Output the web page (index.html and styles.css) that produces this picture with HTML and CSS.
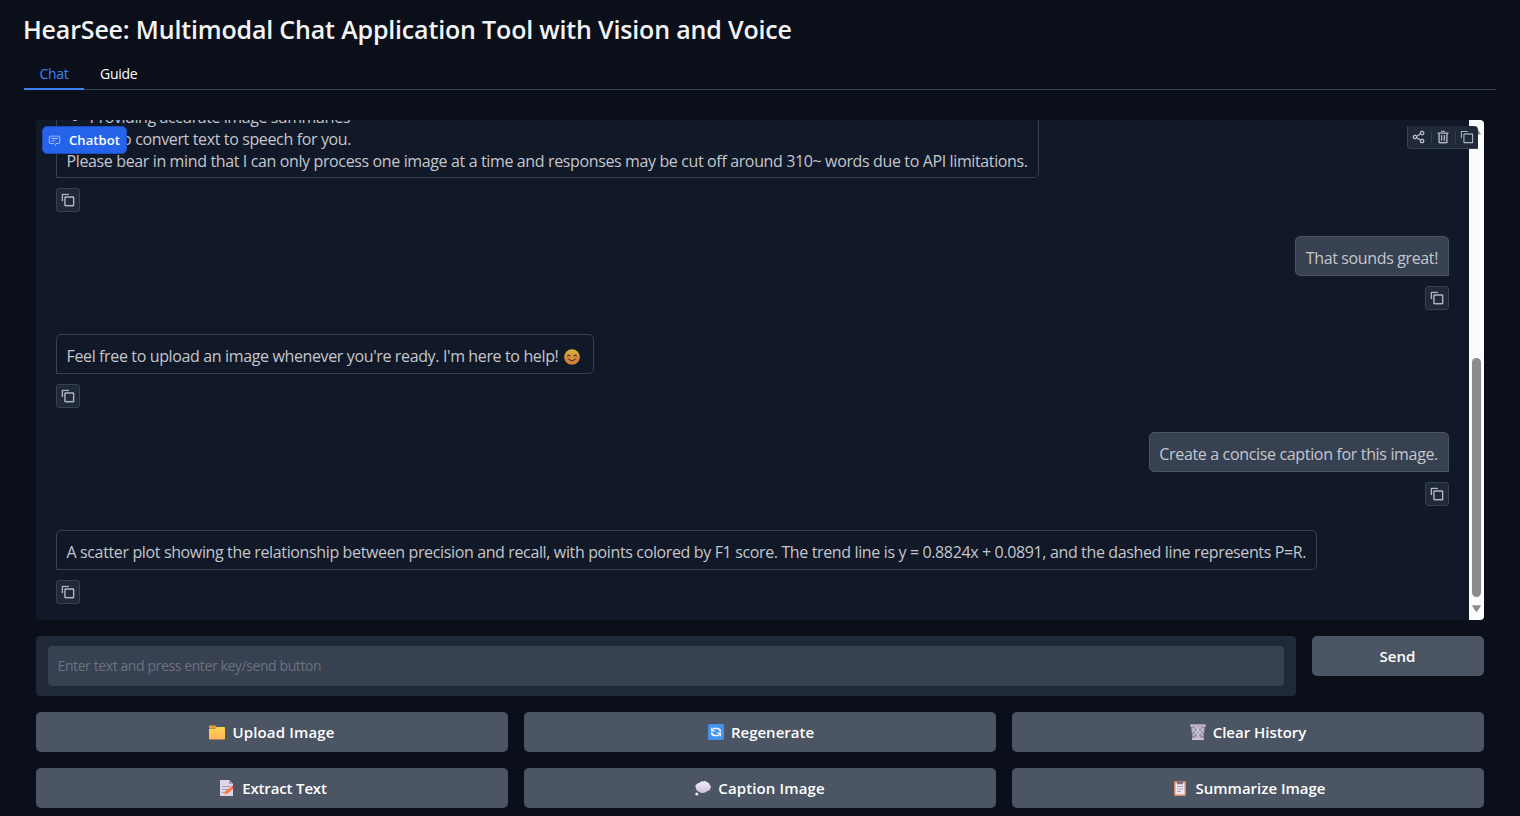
FILE: index.html
```html
<!DOCTYPE html>
<html lang="en">
<head>
<meta charset="utf-8">
<title>HearSee</title>
<link rel="stylesheet" href="styles.css">
</head>
<body>
<svg class="defs" width="0" height="0" aria-hidden="true">
  <symbol id="copy" viewBox="0 0 32 32"><path fill="currentColor" d="M28 10v18H10V10h18m0-2H10a2 2 0 0 0-2 2v18a2 2 0 0 0 2 2h18a2 2 0 0 0 2-2V10a2 2 0 0 0-2-2Z"/><path fill="currentColor" d="M4 18H2V4a2 2 0 0 1 2-2h14v2H4Z"/></symbol>
</svg>
<main class="app">
  <h1 class="title">HearSee: Multimodal Chat Application Tool with Vision and Voice</h1>
  <nav class="tabs"><button class="tab active">Chat</button><button class="tab">Guide</button></nav>
  <section class="panel">
    <div class="chatbot">
      <div class="log">
        <div class="bubble bot">
          <ul class="list"><li>Providing accurate image summaries</li></ul>
          <p class="line l-able">Happy to convert text to speech for you.</p>
          <p class="line l-bear">Please bear in mind that I can only process one image at a time and responses may be cut off around 310~ words due to API limitations.</p>
        </div>
        <button class="copy"><svg><use href="#copy"/></svg></button>
        <div class="bubble user"><p class="line l-great">That sounds great!</p></div>
        <button class="copy right"><svg><use href="#copy"/></svg></button>
        <div class="bubble bot"><p class="line l-free">Feel free to upload an image whenever you're ready. I'm here to help!
          <svg class="smile" viewBox="0 0 16 16"><defs><linearGradient id="face" x1="0" y1="0" x2="0" y2="1"><stop offset="0" stop-color="#d8b13c"/><stop offset="1" stop-color="#d57b38"/></linearGradient></defs><circle cx="8" cy="8" r="7.8" fill="url(#face)"/><ellipse cx="3.5" cy="9.4" rx="2" ry="1.6" fill="#d9653c" opacity=".55"/><ellipse cx="12.5" cy="9.4" rx="2" ry="1.6" fill="#d9653c" opacity=".55"/><path d="M3.5 7q1.3-1.7 2.6 0M9.9 7q1.3-1.7 2.6 0M4.8 10.2q3.2 3.2 6.4 0" fill="none" stroke="#50343b" stroke-width="1.1" stroke-linecap="round"/></svg></p></div>
        <button class="copy"><svg><use href="#copy"/></svg></button>
        <div class="bubble user"><p class="line l-create">Create a concise caption for this image.</p></div>
        <button class="copy right"><svg><use href="#copy"/></svg></button>
        <div class="bubble bot"><p class="line l-plot">A scatter plot showing the relationship between precision and recall, with points colored by F1 score. The trend line is y = 0.8824x + 0.0891, and the dashed line represents P=R.</p></div>
        <button class="copy"><svg><use href="#copy"/></svg></button>
      </div>
      <div class="scrollbar">
        <svg class="arrow" viewBox="0 0 9 7"><path d="M1 6.5h7q1 0 .5-1L5.3.8q-.8-1-1.6 0L.5 5.500q-.5 1 .5 1Z" fill="#8b8b8b"/></svg>
        <div class="thumb"></div>
        <svg class="arrow" viewBox="0 0 9 7"><path d="M1 .3h7q1 0 .7 1L5.3 6.300q-.8 1-1.600 0L.3 1.300Q0 .3 1 .3Z" fill="#8b8b8b"/></svg>
      </div>
      <div class="label">
        <svg viewBox="0 0 32 32"><path fill="currentColor" d="M17.740 30 16 29l4-7h6a2 2 0 0 0 2-2V8a2 2 0 0 0-2-2H6a2 2 0 0 0-2 2v12a2 2 0 0 0 2 2h9v2H6a4 4 0 0 1-4-4V8a4 4 0 0 1 4-4h20a4 4 0 0 1 4 4v12a4 4 0 0 1-4 4h-4.840Z"/><path fill="currentColor" d="M8 10h16v2H8zm0 6h10v2H8z"/></svg>
        <span>Chatbot</span>
      </div>
      <div class="tools">
        <svg viewBox="0 0 32 32"><path fill="currentColor" stroke="currentColor" stroke-width=".6" d="M23 20a5 5 0 0 0-3.890 1.890l-7.310-4.570a4.460 4.460 0 0 0 0-2.640l7.310-4.570A5 5 0 1 0 18 7a4.790 4.790 0 0 0 .2 1.320l-7.310 4.570a5 5 0 1 0 0 6.220l7.310 4.570A4.790 4.790 0 0 0 18 25a5 5 0 1 0 5-5ZM23 4a3 3 0 1 1-3 3 3 3 0 0 1 3-3ZM7 19a3 3 0 1 1 3-3 3 3 0 0 1-3 3Zm16 9a3 3 0 1 1 3-3 3 3 0 0 1-3 3Z"/></svg>
        <i></i>
        <svg viewBox="0 0 32 32"><path fill="currentColor" stroke="currentColor" stroke-width=".6" d="M12 12h2v12h-2zM18 12h2v12h-2zM4 6v2h2v20a2 2 0 0 0 2 2h16a2 2 0 0 0 2-2V8h2V6ZM8 28V8h16v20ZM12 2h8v2h-8z"/></svg>
        <i></i>
        <svg><use href="#copy"/></svg>
      </div>
    </div>
    <div class="entry">
      <div class="field"><input type="text" placeholder="Enter text and press enter key/send button"></div>
      <button class="btn b-send">Send</button>
    </div>
    <div class="actions">
      <button class="btn b-upload"><svg class="emoji" viewBox="0 0 16 16"><defs><linearGradient id="fold" x1="0" y1="0" x2="0" y2="1"><stop offset="0" stop-color="#ffd84d"/><stop offset="1" stop-color="#ffb15c"/></linearGradient></defs><path d="M0 2.500q0-1 1-1h5.500l2 2.500H0Z" fill="#e3a33a"/><path d="M0 5.500q0-1 1-1h5.500l2-1.500H15q1 0 1 1v10.500q0 1-1 1H1q-1 0-1-1Z" fill="url(#fold)"/></svg>Upload Image</button>
      <button class="btn b-regen"><svg class="emoji" viewBox="0 0 16 16"><rect width="16" height="16" rx="1.500" fill="#4394ef"/><g fill="none" stroke="#f4f1ff" stroke-width="1.700"><path d="M3.500 8.300q.3 3.200 3.700 3.200h4M12.500 7.700q-.3-3.200-3.700-3.200h-4"/></g><path d="M3 3.200v4.400h4.400ZM13 12.800V8.400H8.600Z" fill="#f4f1ff"/></svg>Regenerate</button>
      <button class="btn b-clear"><svg class="emoji" viewBox="0 0 16 16"><path d="M1 2h14l-1.500 14h-11Z" fill="#9992a5"/><path d="m2 4 9 11M6 3l7 9M10 3l4 5M14 4 5 15M10 3l-7 9M6 3 2 8M8 3v12" stroke="#e0dbe7" stroke-width=".8"/><path d="M2 15h12" stroke="#d8d1df" stroke-width="1.500"/><rect width="16" height="2.500" y=".3" rx="1" fill="#bcb3c6"/></svg>Clear History</button>
      <button class="btn b-extract"><svg class="emoji" viewBox="0 0 16 16"><path d="M1 0h9l4 4v12H1Z" fill="#ddd6e6"/><path d="M10 0v4h4Z" fill="#aaa1b8"/><path d="M3 6.500h8M3 9.500h6M3 12.500h3" stroke="#a79fb2"/><path d="m5 15 1-3.500 6-4.500 2 2-6 5Z" fill="#ff7846"/><path d="m12 7 1.500-1.300 2 2L14 9Z" fill="#e8443f"/><path d="m5 15 .8-2.500 1.700 1.800Z" fill="#f5c796"/></svg>Extract Text</button>
      <button class="btn b-caption"><svg class="emoji" viewBox="0 0 16 16"><defs><linearGradient id="cloud" x1="0" y1="0" x2="0" y2="1"><stop offset="0" stop-color="#f5f2fa"/><stop offset="1" stop-color="#cbbfe0"/></linearGradient></defs><path d="M4.500 3Q5.500.8 8 1.500q2.500-1.300 4 .7 2.500.2 2.600 2.500 2.200 1.800.6 4-.4 2.200-2.900 2.300-1.400 2-3.800 1.700-2.600 1-4-.8Q1 11.200 1.200 8.500-.5 6 1.400 4.500 2 2.800 4.500 3Z" fill="url(#cloud)"/><circle cx="1.800" cy="14" r="1.600" fill="#eee8f4"/></svg>Caption Image</button>
      <button class="btn b-summary"><svg class="emoji" viewBox="0 0 16 16"><rect x="2" y="1" width="12" height="15" rx="1" fill="#d98c65"/><path d="M3.500 3h9v11.500h-9Z" fill="#eee8f5"/><path d="M5 6.500h6M5 9h6M5 11.500h4" stroke="#aaa0b5"/><path d="M5 1.500h1.700q.2-1.500 1.300-1.500t1.300 1.500H11v2.700H5Z" fill="#796e80"/></svg>Summarize Image</button>
    </div>
  </section>
</main>
</body>
</html>
```
FILE: styles.css
```css
* { box-sizing: border-box; }
body { margin: 0; height: 816px; overflow: hidden; background: #0b0f19; color: #fff; font-family: "Open Sans", "Noto Sans", sans-serif; }
.defs { position: absolute; }
button { font: inherit; color: inherit; border: 0; background: none; padding: 0; white-space: nowrap; }
.app { padding: 0 24px; }
.title { margin: 0 0 0 -1px; padding-top: 11px; height: 60px; font-size: 25px; line-height: 36px; font-weight: 600; color: #f3f4f6; white-space: nowrap; letter-spacing: -.17px; }
.tabs { display: flex; height: 30px; border-bottom: 1px solid #374151; }
.tab { height: 30px; padding: 0 16px 2px; font-size: 14px; line-height: 28px; letter-spacing: -.3px; }
.tab.active { width: 60px; padding: 0; border-bottom: 2px solid #3b82f6; color: #3b82f6; }
.panel { display: flex; flex-direction: column; gap: 16px; padding: 30px 12px 0; }
.chatbot { position: relative; display: flex; height: 500px; border-radius: 4px; overflow: hidden; background: #111827; }
.log { flex: 1; min-width: 0; display: flex; flex-direction: column; justify-content: flex-end; align-items: flex-start; padding: 0 20px 16px; }
.bubble { flex: none; padding: 10px 10px 5px 9.5px; border: 1px solid #374151; border-radius: 5px; font-size: 16px; line-height: 22px; color: #c4c7cd; white-space: nowrap; }
.bot { border-bottom-left-radius: 0; }
.user { align-self: flex-end; background: #374151; border-color: #4b5563; border-bottom-right-radius: 0; }
.line { margin: 0; height: 23px; letter-spacing: -.365px; }
.list { margin: 0; padding-left: 23px; letter-spacing: -.44px; }
.l-able { height: 22px; }
.l-bear { height: 22px; letter-spacing: -.37px; }
.l-great { letter-spacing: -.37px; }
.l-free { padding-right: 3px; }
.l-create { letter-spacing: -.34px; }
.copy { flex: none; display: flex; align-items: center; justify-content: center; width: 24px; height: 24px; margin: 10px 0 24px; border: 1px solid #374151; border-radius: 3px; background: #1f2937; color: #d1d5db; }
.copy:last-child { margin-bottom: 0; }
.copy.right { align-self: flex-end; }
.copy svg { width: 14px; height: 14px; stroke: currentColor; stroke-width: .6; }
.smile { width: 16px; height: 16px; margin-left: 2px; vertical-align: -3px; }
.scrollbar { width: 15px; display: flex; flex-direction: column; align-items: center; padding: 8px 0; background: #fcfcfc; }
.arrow { width: 9px; height: 7px; flex: none; }
.thumb { width: 9px; height: 239px; margin-top: auto; margin-bottom: 8px; border-radius: 5px; background: #8b8b8b; }
.label { position: absolute; left: 6px; top: 6px; display: flex; align-items: center; gap: 8px; width: 85px; height: 28px; padding-left: 5px; border: 1px solid #1d4fbb; border-radius: 5px; background: #2563eb; font-size: 13px; font-weight: 600; letter-spacing: .1px; }
.label svg { width: 13px; height: 13px; color: #b9cefb; }
.tools { position: absolute; right: 6px; top: 6px; display: flex; align-items: center; justify-content: space-between; width: 71px; height: 23px; padding: 0 4px; border: 1px solid #374151; border-width: 0 0 1px 1px; border-radius: 0 4px 0 4px; background: #1f2937; color: #d1d5db; }
.tools svg { width: 14px; height: 14px; }
.tools i { width: 1px; height: 11px; background: #374151; }
.entry { display: flex; gap: 16px; height: 60px; }
.field { flex: 1; padding: 10px 12px; border-radius: 4px; background: #1f2937; }
.field input { display: block; width: 100%; height: 40px; padding: 0 9.5px 1px; border: 0; border-radius: 4px; background: #374151; font: 14px "Open Sans", sans-serif; letter-spacing: -.4px; }
.field input::placeholder { color: #6b7280; opacity: 1; }
.btn { display: flex; align-items: center; justify-content: center; height: 40px; border-radius: 5px; background: #4b5563; font-size: 15px; font-weight: 600; }
.b-send { width: 172px; padding-right: 1px; }
.actions { display: grid; grid-template-columns: repeat(3, 1fr); gap: 16px; }
.emoji { width: 16px; height: 16px; margin-right: 7px; flex: none; }
.b-upload { letter-spacing: .15px; }
.b-regen { padding-left: 2px; }
.b-extract { padding-left: 2px; letter-spacing: -.15px; }
.b-caption { letter-spacing: .12px; }
.b-summary { padding-left: 2px; }
```
